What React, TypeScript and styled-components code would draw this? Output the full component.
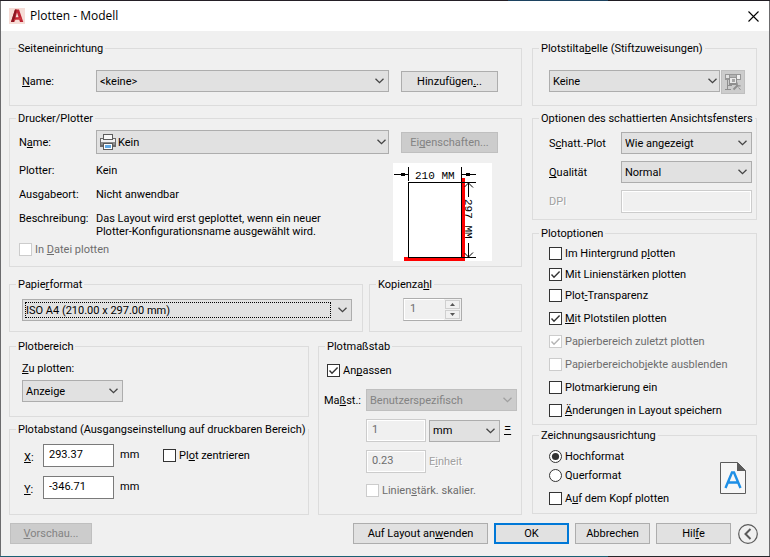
import React, { useId } from "react";
import type { ReactNode } from "react";
import styled, { createGlobalStyle, css } from "styled-components";

const GlobalStyle = createGlobalStyle`
  *, *::before, *::after { box-sizing: border-box; }
  body {
    margin: 0;
    background: #f0f0f0;
    color: #000;
    font: 11px/13px Roboto, "Noto Sans", sans-serif;
  }
  input, select, button { font: inherit; color: inherit; margin: 0; }
  u { text-underline-offset: 1px; text-decoration-thickness: 1px; text-decoration-skip-ink: none; }
`;

/* ---------- Window frame ---------- */

const Desktop = styled.div`
  min-height: 100vh;
  padding: 1px;
  display: flex;
  background:
    linear-gradient(90deg, #241f26 66%, #1c4260 66%, #1c4260 79%, #1f1b22 79%) top / 100% 1px no-repeat,
    linear-gradient(90deg, #1b5f74 79%, #26262b 79%) bottom / 100% 1px no-repeat,
    #6b6b6d;
`;

const Window = styled.div`
  flex: 1;
  min-width: 0;
  display: flex;
  flex-direction: column;
  background: #f0f0f0;
`;

const TitleBar = styled.header`
  display: flex;
  align-items: center;
  gap: 5px;
  height: 30px;
  padding: 0 8px;
  background: #fff;
`;

const Title = styled.h1`
  flex: 1;
  margin: 0;
  font: 400 12px/16px "Open Sans", sans-serif;
`;

const CloseButton = styled.button`
  display: flex;
  padding: 2px;
  border: 0;
  background: none;
`;

const Content = styled.main`
  display: grid;
  grid-template-columns: minmax(0, 1fr) 225px;
  column-gap: 10px;
  padding: 11px 12px 0 8px;
`;

const Column = styled.div`
  display: flex;
  flex-direction: column;
`;

const Split = styled.div<{ $right: number; $gap: number; $top: number }>`
  display: grid;
  grid-template-columns: minmax(0, 1fr) ${(p) => p.$right}px;
  column-gap: ${(p) => p.$gap}px;
  margin-top: ${(p) => p.$top}px;
`;

/* ---------- Group boxes ---------- */

const Fieldset = styled.fieldset<{ $top?: number }>`
  min-width: 0;
  margin: ${(p) => p.$top ?? 0}px 0 0;
  padding: 0;
  border: 1px solid #dcdcdc;
`;

const Legend = styled.legend`
  margin-left: 6px;
  padding: 0 2px;
  line-height: 13px;
  white-space: nowrap;
`;

const GroupBody = styled.div<{ $pad: string }>`
  padding: ${(p) => p.$pad};
`;

interface GroupProps {
  title: ReactNode;
  pad: string;
  top?: number;
  children: ReactNode;
}

function Group({ title, pad, top, children }: GroupProps) {
  return (
    <Fieldset $top={top}>
      <Legend>{title}</Legend>
      <GroupBody $pad={pad}>{children}</GroupBody>
    </Fieldset>
  );
}

/* ---------- Controls ---------- */

const Button = styled.button<{ $width?: number; $primary?: boolean }>`
  width: ${(p) => (p.$width ? `${p.$width}px` : "auto")};
  height: 21px;
  padding: 0;
  border: ${(p) => (p.$primary ? "2px solid #0078d7" : "1px solid #adadad")};
  background: #e1e1e1;
  white-space: nowrap;
  &:disabled {
    border-color: #bfbfbf;
    background: #cccccc;
    color: #838383;
  }
`;

const IconButton = styled(Button)`
  width: 24px;
  height: 24px;
  display: grid;
  place-items: center;
`;

const SelectBox = styled.div<{ $tight?: boolean }>`
  display: grid;
  align-items: center;
  min-width: 0;
  > * { grid-area: 1 / 1; }
  > svg { pointer-events: none; }
  > svg:last-child {
    justify-self: end;
    margin-right: ${(p) => (p.$tight ? 3 : 5)}px;
  }
`;

const SelectInput = styled.select<{ $tall?: boolean; $indent: number }>`
  appearance: none;
  width: 100%;
  height: ${(p) => (p.$tall ? 24 : 22)}px;
  padding: 0 20px 0 ${(p) => p.$indent}px;
  border: 1px solid #adadad;
  border-radius: 0;
  background: #e1e1e1;
  outline: 0;
  &:disabled {
    border-color: #bfbfbf;
    background: #cccccc;
    color: #838383;
    opacity: 1;
  }
`;

const FocusRing = styled.span`
  margin: 0 21px 0 3px;
  height: 16px;
  border: 1px dotted #000;
  pointer-events: none;
`;

const LeadIcon = styled.span`
  display: flex;
  margin-left: 4px;
  pointer-events: none;
`;

const TextInput = styled.input`
  width: 100%;
  min-width: 0;
  height: 23px;
  padding: 0 5px 3px;
  border: 1px solid #7a7a7a;
  border-radius: 0;
  background: #fff;
  outline: 0;
  &:disabled {
    border-color: #cccccc;
    background: #f0f0f0;
    box-shadow: inset 0 0 0 1px #fff;
    color: #6d6d6d;
  }
`;

const Label = styled.label<{ $etched?: boolean }>`
  white-space: nowrap;
  ${(p) =>
    p.$etched &&
    css`
      color: #a0a0a0;
      text-shadow: 1px 1px 0 #fff;
    `}
`;

const CheckLabel = styled.label<{ $disabled?: boolean }>`
  display: flex;
  width: fit-content;
  align-items: center;
  gap: 3px;
  white-space: nowrap;
  color: ${(p) => (p.$disabled ? "#6d6d6d" : "#000")};
`;

const Mark = styled.span`
  flex: none;
  display: grid;
  width: 13px;
  height: 13px;
  > * { grid-area: 1 / 1; }
  svg { display: none; pointer-events: none; }
  input:checked + svg { display: block; }
`;

const MarkInput = styled.input`
  appearance: none;
  width: 13px;
  height: 13px;
  border: 1px solid #333;
  border-radius: ${(p) => (p.type === "radio" ? "50%" : "0")};
  background: #fff;
  &:disabled { border-color: #cccccc; }
`;

interface CheckProps {
  children: ReactNode;
  checked?: boolean;
  disabled?: boolean;
}

function Check({ children, checked, disabled }: CheckProps) {
  return (
    <CheckLabel $disabled={disabled}>
      <Mark>
        <MarkInput type="checkbox" defaultChecked={checked} disabled={disabled} />
        <svg width="13" height="13" viewBox="0 0 13 13" fill="none">
          <path d="M2.5 6.5 5 9.2 10.6 3.4" stroke={disabled ? "#b4b4b4" : "#333"} strokeWidth="1.4" />
        </svg>
      </Mark>
      <span>{children}</span>
    </CheckLabel>
  );
}

function Radio({ children, checked }: CheckProps) {
  return (
    <CheckLabel>
      <Mark>
        <MarkInput type="radio" name="orientation" defaultChecked={checked} />
        <svg width="13" height="13" viewBox="0 0 13 13">
          <circle cx="6.5" cy="6.5" r="3.6" fill="#333" />
        </svg>
      </Mark>
      <span>{children}</span>
    </CheckLabel>
  );
}

interface SelectProps {
  id?: string;
  label?: string;
  value: string;
  disabled?: boolean;
  tall?: boolean;
  tight?: boolean;
  focused?: boolean;
  icon?: ReactNode;
}

function Select({ id, label, value, disabled, tall, tight, focused, icon }: SelectProps) {
  return (
    <SelectBox $tight={tight}>
      <SelectInput id={id} aria-label={label} disabled={disabled} $tall={tall} $indent={icon ? 21 : 3}>
        <option>{value}</option>
      </SelectInput>
      {focused && <FocusRing />}
      {icon && <LeadIcon>{icon}</LeadIcon>}
      <svg width="9" height="6" viewBox="0 0 9 6" fill="none">
        <path d="M.5.7 4.5 4.7 8.5.7" stroke={disabled ? "#a0a0a0" : "#444"} strokeWidth="1.3" />
      </svg>
    </SelectBox>
  );
}

/* ---------- Layout helpers ---------- */

const SetupRow = styled.div`
  display: grid;
  grid-template-columns: auto minmax(0, 1fr) 97px;
  align-items: center;
  column-gap: 12px;
`;

const Field = styled.div<{ $label: number }>`
  display: grid;
  grid-template-columns: ${(p) => p.$label}px minmax(0, 1fr);
  align-items: center;
`;

const SetupField = styled(Field)`
  grid-column: span 2;
`;

const Stack = styled.div<{ $gap: number; $top?: number }>`
  display: flex;
  flex-direction: column;
  align-items: stretch;
  gap: ${(p) => p.$gap}px;
  margin-top: ${(p) => p.$top ?? 0}px;
`;

const PlotterDetails = styled.div`
  display: flex;
  justify-content: space-between;
  align-items: flex-start;
  padding: 9px 6px 0 0;
`;

const Info = styled.dl`
  display: grid;
  grid-template-columns: 77px auto;
  row-gap: 11px;
  margin: 1px 0 5px;
  white-space: nowrap;
  dt, dd { margin: 0; }
`;

const StyleRow = styled.div`
  display: grid;
  grid-template-columns: minmax(0, 1fr) 24px;
  column-gap: 1px;
  align-items: start;
`;

const Spinner = styled.div`
  display: flex;
  width: 59px;
  height: 23px;
  margin: 0 auto 0 33px;
  border: 1px solid #adadad;
  border-left-color: #cccccc;
`;

const SpinnerInput = styled.input`
  flex: 1;
  min-width: 0;
  padding: 0 5px 3px;
  border: 1px solid #fff;
  border-right: 0;
  background: #f0f0f0;
  color: #6d6d6d;
`;

const SpinnerKeys = styled.div`
  display: grid;
  gap: 1px;
  padding: 1px;
  width: 17px;
`;

const SpinnerKey = styled.button`
  display: grid;
  place-items: center;
  padding: 0;
  border: 1px solid #cfcfcf;
  background: #f0f0f0;
`;

const AreaSelect = styled.div`
  width: 101px;
  margin-top: 5px;
`;

const OffsetRow = styled.div`
  display: grid;
  grid-template-columns: 19px 71px 49px auto;
  align-items: center;
  justify-content: start;
  > label:first-child { align-self: end; padding-bottom: 3px; }
`;

const Unit = styled.span`
  padding: 0 0 2px 6px;
`;

const Equals = styled.span`
  padding: 0 0 5px 1px;
  font-size: 13px;
`;

const ScaleGrid = styled.div`
  display: grid;
  grid-template-columns: 39px 60px 71px auto;
  align-items: center;
  row-gap: 8px;
  padding-top: 12px;
  column-gap: 3px;
`;

const ScaleSpan = styled.div<{ $top?: number }>`
  grid-column: 2 / -1;
  padding-top: ${(p) => p.$top ?? 0}px;
`;

const OrientationRow = styled.div`
  display: flex;
  justify-content: space-between;
  align-items: center;
`;

const Footer = styled.footer`
  display: flex;
  align-items: center;
  gap: 6px;
  padding: 8px 11px 12px 9px;
`;

const Spacer = styled.span`
  flex: 1;
`;

const RoundButton = styled.button`
  display: flex;
  padding: 0 0 0 1px;
  border: 0;
  background: none;
`;

/* ---------- Drawings ---------- */

function AppIcon() {
  return (
    <svg width="16" height="16" viewBox="0 0 16 16">
      <rect width="16" height="16" fill="#f6ddd7" />
      <path d="M2 14 6 1.5h4L14.3 14H11l-.8-2.6H6.6L5 14z" fill="#bd2433" />
      <path d="M2 14 6 1.5h1.6L5 14z" fill="#8c1622" />
      <path d="M8 4.6 9.6 9.2H6.7z" fill="#f6ddd7" />
      <path d="M5 11.4 12 9.4l.8 2H6.6L5 14z" fill="#d43a41" />
    </svg>
  );
}

function PrinterIcon() {
  return (
    <svg width="16" height="16" viewBox="0 0 16 16" shapeRendering="crispEdges">
      <rect x="0" y="4" width="16" height="9" fill="#6a6a6a" />
      <rect x="1" y="5" width="14" height="3" fill="#f2f2f2" />
      <rect x="1" y="8" width="14" height="3" fill="#8e8e8e" />
      <rect x="3" y="0" width="10" height="6" fill="#5c5c5c" />
      <rect x="4" y="1" width="8" height="4" fill="#f7f7f7" />
      <rect x="3" y="9" width="10" height="7" fill="#5c5c5c" />
      <rect x="4" y="10" width="8" height="5" fill="#fff" />
      <rect x="5" y="11" width="6" height="3" fill="#62a9e4" />
    </svg>
  );
}

function PlotStyleIcon() {
  return (
    <svg width="17" height="17" viewBox="0 0 17 17" fill="none">
      <g shapeRendering="crispEdges">
        <rect x="0" y="0" width="16" height="6" fill="#979797" />
        <rect x="1" y="1" width="3" height="3" fill="#e2e2e2" />
        <rect x="12" y="1" width="3" height="4" fill="#f0f0f0" />
        <rect x="5" y="1" width="6" height="2" fill="#b4b4b4" />
        <rect x="4" y="4" width="8" height="7" fill="#8e8e8e" />
        <rect x="5" y="4" width="6" height="5" fill="#e9e9e9" />
        <rect x="7" y="5" width="3" height="3" fill="#a6a6a6" />
        <rect x="2" y="6" width="1" height="9" fill="#8e8e8e" />
        <rect x="0" y="15" width="6" height="1" fill="#8e8e8e" />
        <rect x="2" y="11" width="5" height="1" fill="#8e8e8e" />
      </g>
      <path d="M8.5 15.5 13 11" stroke="#909090" strokeWidth="2" />
      <path d="M12 8.5v3.4h3.6" stroke="#909090" strokeWidth="1.4" />
      <path d="M13.5 13.5 15.5 15.8" stroke="#8e8e8e" />
    </svg>
  );
}

function PaperPreview() {
  return (
    <svg width="99" height="98" viewBox="0 0 99 98" role="img" aria-label="210 MM x 297 MM">
      <g shapeRendering="crispEdges">
        <rect width="99" height="98" fill="#fff" />
        <rect x="69" y="15" width="3" height="83" fill="#f00" />
        <rect x="11" y="94" width="61" height="4" fill="#f00" />
        <rect x="15.5" y="19.5" width="53" height="75" fill="#fff" stroke="#000" />
        <path
          d="M15.5 4v14M68.5 4v15M1 11.5h14M69 11.5h14M69 19.5h14M69 94.5h14M75.5 20v14M75.5 80v14"
          stroke="#000"
        />
        <rect x="8" y="10" width="4" height="3" />
        <rect x="73" y="10" width="4" height="3" />
      </g>
      <path d="M71.5 24 75.5 20 80 24.5M71.5 90 75.5 94 80 89.5" fill="none" stroke="#000" />
      <g fontFamily="'Liberation Mono', monospace" fontSize="11">
        <text x="22" y="16">210 MM</text>
        <text transform="translate(72 36) rotate(90)">297 MM</text>
      </g>
    </svg>
  );
}

function PageIcon() {
  return (
    <svg width="26" height="32" viewBox="0 0 26 32" fill="none">
      <path d="M.5.5h17l8 8v23H.5z" fill="#f7f7f7" stroke="#5c5c5c" />
      <path d="M17 0v9h9z" fill="#5c5c5c" />
      <path d="M5.500 26 12 10.500h2L20.500 26M8.200 20.500h9.600" stroke="#1e8fe6" strokeWidth="2.400" />
    </svg>
  );
}

/* ---------- Dialog ---------- */

export default function App() {
  const id = useId();
  return (
    <>
      <GlobalStyle />
      <Desktop>
        <Window>
          <TitleBar>
            <AppIcon />
            <Title>Plotten - Modell</Title>
            <CloseButton aria-label="Schließen">
              <svg width="11" height="11" viewBox="0 0 11 11">
                <path d="M.5.5l10 10M10.500.5l-10 10" stroke="#000" strokeWidth="1.100" />
              </svg>
            </CloseButton>
          </TitleBar>

          <Content>
            <Column>
              <Group title="Seiteneinrichtung" pad="15px 23px 13px 12px">
                <SetupRow>
                  <SetupField $label={74}>
                    <Label htmlFor={`${id}setup`}><u>N</u>ame:</Label>
                    <Select id={`${id}setup`} value="<keine>" />
                  </SetupField>
                  <Button>Hinzufügen<u>.</u>..</Button>
                </SetupRow>
              </Group>

              <Group title="Drucker/Plotter" top={6} pad="5px 23px 5px 9px">
                <SetupRow>
                  <SetupField $label={77}>
                    <Label htmlFor={`${id}printer`}>N<u>a</u>me:</Label>
                    <Select id={`${id}printer`} value="Kein" tall tight icon={<PrinterIcon />} />
                  </SetupField>
                  <Button disabled>Ei<u>g</u>enschaften...</Button>
                </SetupRow>
                <PlotterDetails>
                  <div>
                    <Info>
                      <dt>Plotter:</dt>
                      <dd>Kein</dd>
                      <dt>Ausgabeort:</dt>
                      <dd>Nicht anwendbar</dd>
                      <dt>Beschreibung:</dt>
                      <dd>
                        Das Layout wird erst geplottet, wenn ein neuer
                        <br />
                        Plotter-Konfigurationsname ausgewählt wird.
                      </dd>
                    </Info>
                    <Check disabled>In <u>D</u>atei plotten</Check>
                  </div>
                  <PaperPreview />
                </PlotterDetails>
              </Group>

              <Split $right={153} $gap={6} $top={11}>
                <Group title={<>Papie<u>r</u>format</>} pad="8px 10px 10px 12px">
                  <Select label="Papierformat" value="ISO A4 (210.00 x 297.00 mm)" focused />
                </Group>
                <Group title={<>Kopienza<u>h</u>l</>} pad="7px 0">
                  <Spinner>
                    <SpinnerInput aria-label="Kopienzahl" defaultValue="1" disabled />
                    <SpinnerKeys>
                      <SpinnerKey disabled aria-label="Mehr">
                        <svg width="5" height="3" viewBox="0 0 5 3"><path d="M0 3 2.500 0 5 3z" fill="#555" /></svg>
                      </SpinnerKey>
                      <SpinnerKey disabled aria-label="Weniger">
                        <svg width="5" height="3" viewBox="0 0 5 3"><path d="M0 0 2.500 3 5 0z" fill="#555" /></svg>
                      </SpinnerKey>
                    </SpinnerKeys>
                  </Spinner>
                </Group>
              </Split>

              <Split $right={204} $gap={9} $top={8}>
                <Column>
                  <Group title="Plotbereich" pad="9px 12px 14px">
                    <Label htmlFor={`${id}area`}><u>Z</u>u plotten:</Label>
                    <AreaSelect>
                      <Select id={`${id}area`} value="Anzeige" />
                    </AreaSelect>
                  </Group>
                  <Group title="Plotabstand (Ausgangseinstellung auf druckbaren Bereich)" top={6} pad="8px 14px 15px">
                    <Stack $gap={9}>
                      <OffsetRow>
                        <Label htmlFor={`${id}x`}><u>X</u>:</Label>
                        <TextInput id={`${id}x`} defaultValue="293.37" />
                        <Unit>mm</Unit>
                        <Check>Pl<u>o</u>t zentrieren</Check>
                      </OffsetRow>
                      <OffsetRow>
                        <Label htmlFor={`${id}y`}><u>Y</u>:</Label>
                        <TextInput id={`${id}y`} defaultValue="-346.71" />
                        <Unit>mm</Unit>
                      </OffsetRow>
                    </Stack>
                  </Group>
                </Column>

                <Group title="Plotmaßstab" pad="11px 4px 15px 5px">
                  <GroupBody $pad="0 3px"><Check checked>An<u>p</u>assen</Check></GroupBody>
                  <ScaleGrid>
                    <Label htmlFor={`${id}scale`}>Ma<u>ß</u>st.:</Label>
                    <ScaleSpan>
                      <Select id={`${id}scale`} value="Benutzerspezifisch" disabled />
                    </ScaleSpan>
                    <span />
                    <TextInput aria-label="Papiereinheiten" defaultValue="1" disabled />
                    <Select label="Einheit" value="mm" />
                    <Equals><u>=</u></Equals>
                    <span />
                    <TextInput id={`${id}unit`} defaultValue="0.23" disabled />
                    <Label htmlFor={`${id}unit`} $etched>E<u>i</u>nheit</Label>
                    <span />
                    <span />
                    <ScaleSpan $top={3}>
                      <Check disabled>Linien<u>s</u>tärk. skalier.</Check>
                    </ScaleSpan>
                  </ScaleGrid>
                </Group>
              </Split>
            </Column>

            <Column>
              <Group title={<>Plotstilta<u>b</u>elle (Stiftzuweisungen)</>} pad="15px 11px 11px 16px">
                <StyleRow>
                  <Select label="Plotstiltabelle" value="Keine" tight />
                  <IconButton disabled aria-label="Plotstiltabelle bearbeiten">
                    <PlotStyleIcon />
                  </IconButton>
                </StyleRow>
              </Group>

              <Group title="Optionen des schattierten Ansichtsfensters" top={6} pad="7px 4px 6px 16px">
                <Stack $gap={7}>
                  <Field $label={72}>
                    <Label htmlFor={`${id}shade`}>S<u>c</u>hatt.-Plot</Label>
                    <Select id={`${id}shade`} value="Wie angezeigt" />
                  </Field>
                  <Field $label={72}>
                    <Label htmlFor={`${id}quality`}><u>Q</u>ualität</Label>
                    <Select id={`${id}quality`} value="Normal" />
                  </Field>
                  <Field $label={72}>
                    <Label htmlFor={`${id}dpi`} $etched>DPI</Label>
                    <TextInput id={`${id}dpi`} disabled />
                  </Field>
                </Stack>
              </Group>

              <Group title="Plotoptionen" top={7} pad="7px 4px 7px 16px">
                <Stack $gap={8}>
                  <Check>Im Hintergrund p<u>l</u>otten</Check>
                  <Check checked>Mit Linienstärken plotten</Check>
                  <Check>Plot<u>-</u>Transparenz</Check>
                </Stack>
                <Stack $gap={10} $top={10}>
                  <Check checked><u>M</u>it Plotstilen plotten</Check>
                  <Check checked disabled>Papierbereich zuletzt plotten</Check>
                  <Check disabled>Papierbereichob<u>j</u>ekte ausblenden</Check>
                  <Check>Plotmarkierung ein</Check>
                  <Check><u>Ä</u>nderungen in Layout speichern</Check>
                </Stack>
              </Group>

              <Group title="Zeichnungsausrichtung" top={4} pad="8px 10px 8px 16px">
                <OrientationRow>
                  <div>
                    <Stack $gap={6}>
                      <Radio checked>Hochformat</Radio>
                      <Radio>Querformat</Radio>
                    </Stack>
                    <Stack $gap={6} $top={10}>
                      <Check>A<u>u</u>f dem Kopf plotten</Check>
                    </Stack>
                  </div>
                  <PageIcon />
                </OrientationRow>
              </Group>
            </Column>
          </Content>

          <Footer>
            <Button $width={82} disabled><u>V</u>orschau...</Button>
            <Spacer />
            <Button $width={135}>Auf Layout an<u>w</u>enden</Button>
            <Button $width={75} $primary>OK</Button>
            <Button $width={75}>Abbrechen</Button>
            <Button $width={75}>Hil<u>f</u>e</Button>
            <RoundButton aria-label="Weniger Optionen">
              <svg width="20" height="20" viewBox="0 0 20 20" fill="none">
                <circle cx="10" cy="10" r="9.300" stroke="#5a5a5a" strokeWidth="1.200" />
                <path d="M12.500 5 7.500 10l5 5" stroke="#5a5a5a" strokeWidth="2" />
              </svg>
            </RoundButton>
          </Footer>
        </Window>
      </Desktop>
    </>
  );
}
